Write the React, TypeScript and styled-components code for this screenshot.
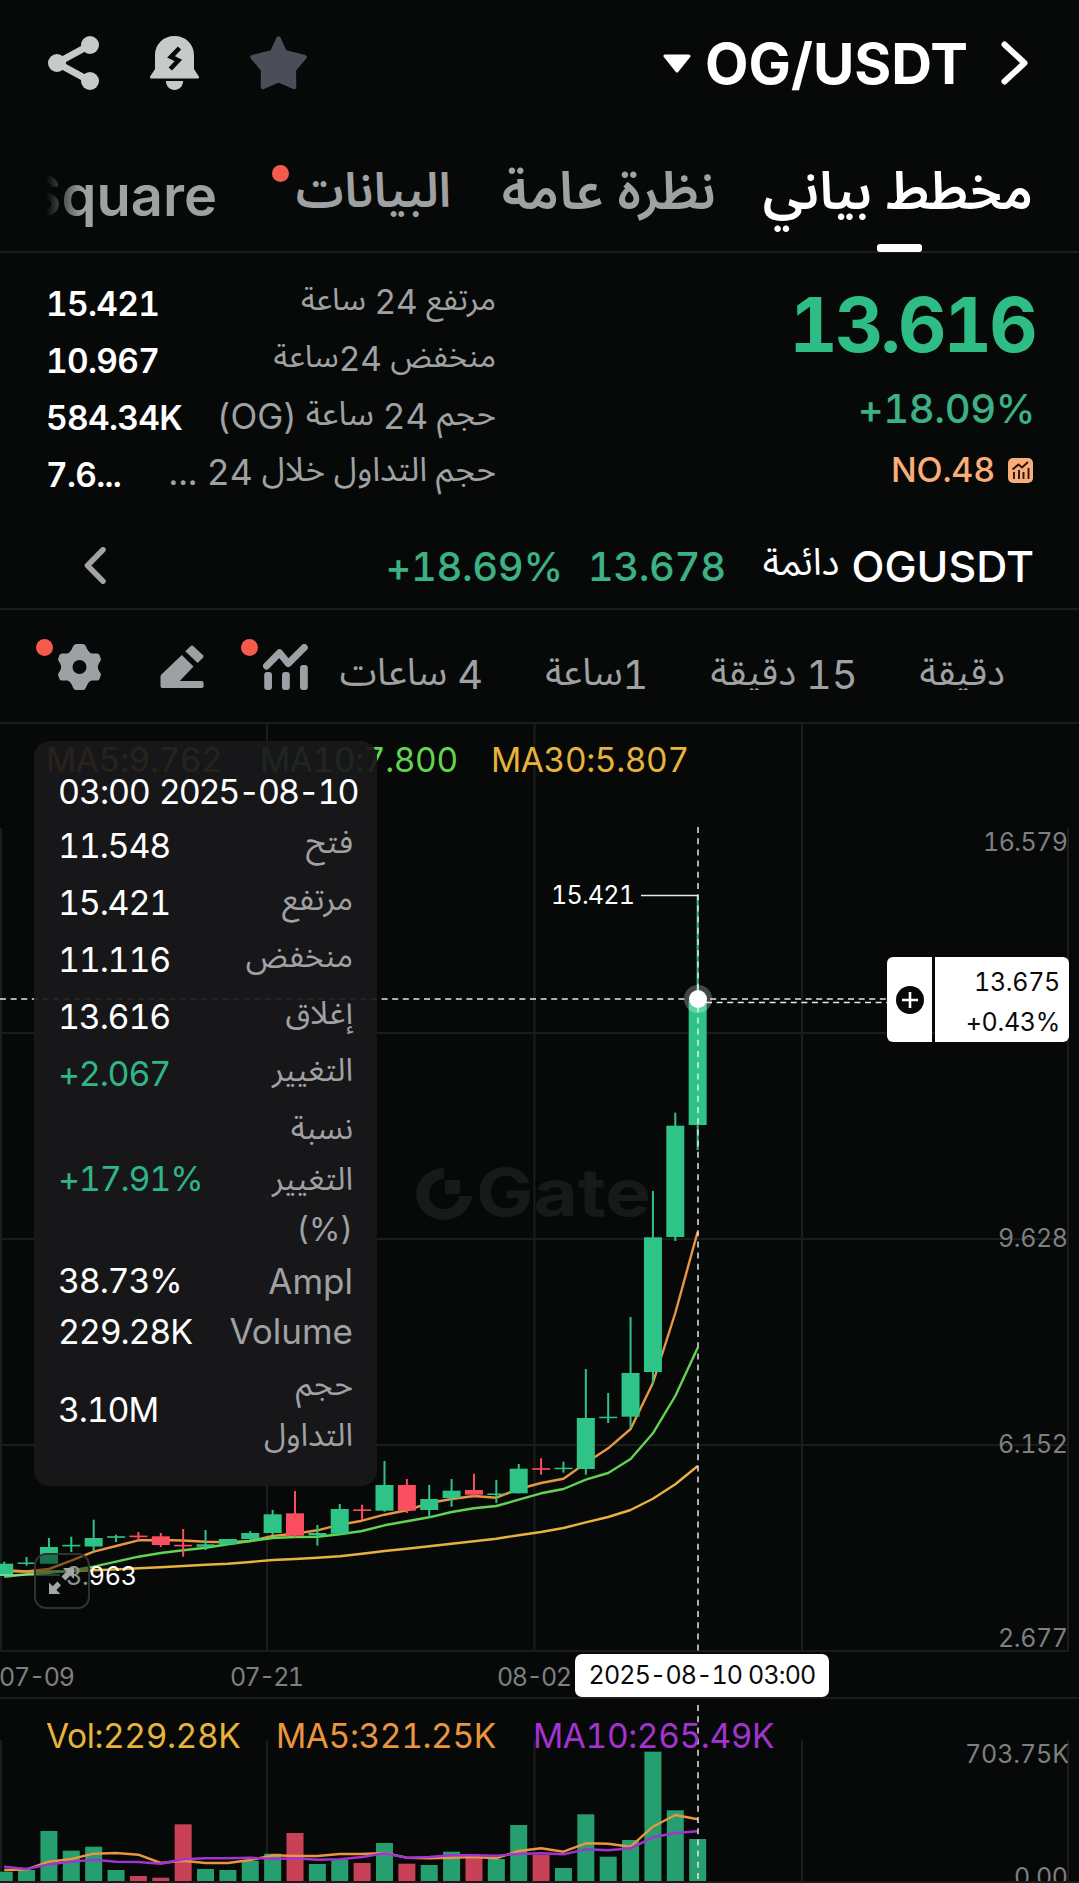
import styled, { createGlobalStyle } from "styled-components";

const colors = {
  bg: "#070909",
  line: "#1b1d1d",
  text: "#ffffff",
  muted: "#9fa1a3",
  axis: "#7d7f80",
  green: "#2ebd85",
  candleUp: "#2ec487",
  candleDown: "#fb4f5f",
  volUp: "#259f6f",
  volDown: "#c94156",
  orange: "#e8963f",
  lime: "#62d352",
  yellow: "#e8b33c",
  purple: "#a233cf",
  peach: "#f9ae7a",
  dot: "#f45b4c",
};

const fontStack =
  'Inter, "Noto Sans Arabic", "DejaVu Sans", "Liberation Sans", sans-serif';

/*
 *  data
 */
const STEP = 22.37;
const FIRST_X = 4.2;
const xAt = (idx: number): number => FIRST_X + idx * STEP;

// high, body top, body bottom, low, is up
type Candle = [number, number, number, number, boolean];

const candles: Candle[] = [
  [1561.7, 1563.7, 1576, 1576, true],
  [1557, 1562.5, 1564, 1565.7, true],
  [1538, 1547, 1563.7, 1563.7, true],
  [1536.7, 1544.8, 1546.4, 1552, true],
  [1519.7, 1538, 1546.5, 1551, true],
  [1534.7, 1536.2, 1537.8, 1542, true],
  [1532, 1535.6, 1537.2, 1540.3, false],
  [1533, 1536.3, 1545, 1547, false],
  [1529, 1544.8, 1546.4, 1556.7, false],
  [1530, 1544.3, 1546.7, 1550, true],
  [1539, 1539, 1544.3, 1544.3, true],
  [1531, 1533, 1539, 1540, true],
  [1510, 1514.3, 1533, 1535, true],
  [1491, 1513.3, 1535.7, 1537, false],
  [1525, 1533, 1535.3, 1545.7, true],
  [1504, 1509, 1533.7, 1533.7, true],
  [1504.7, 1509.4, 1511, 1520, false],
  [1461, 1485, 1510.7, 1511.7, true],
  [1479, 1485, 1510.7, 1513, false],
  [1485, 1499, 1510, 1518, true],
  [1479, 1490.7, 1498, 1506.7, true],
  [1473.7, 1490, 1494.7, 1496.7, false],
  [1480, 1493.5, 1495, 1503, true],
  [1464, 1468.7, 1493.3, 1493.3, true],
  [1458.3, 1468.2, 1469.8, 1474.7, false],
  [1461.7, 1467.7, 1469.2, 1472.7, true],
  [1369, 1418, 1469, 1474.7, true],
  [1393, 1416.7, 1418.2, 1423, true],
  [1317, 1373, 1416.7, 1428, true],
  [1191, 1237.3, 1372, 1384, true],
  [1112.7, 1125.7, 1237, 1241, true],
  [895, 1001, 1125, 1150, true],
];

const ma5 = [
  1570, 1571.5, 1569, 1560.7, 1551.7, 1546, 1540.3, 1540, 1540.5, 1541.7,
  1542.3, 1541, 1536, 1533.7, 1530.3, 1524.7, 1520.7, 1514.7, 1510.3, 1503,
  1499, 1496, 1497.7, 1489, 1483, 1478.7, 1463, 1448.3, 1429, 1383, 1313,
  1231.7,
];
const ma10 = [
  1576.7, 1574.3, 1572.7, 1570.5, 1566.7, 1561.7, 1556.7, 1553, 1550.3, 1547.7,
  1544.3, 1541, 1538, 1537, 1536.7, 1534.3, 1531, 1525.3, 1521.3, 1517.3, 1512,
  1508.3, 1506, 1499.7, 1493.3, 1489, 1479.7, 1473, 1459, 1433.3, 1396, 1347.7,
];
const ma30 = [
  1571, 1571.5, 1571.5, 1571.2, 1570.3, 1569.4, 1568.3, 1567.2, 1566, 1564.8,
  1563.7, 1562, 1560, 1559, 1557.7, 1556.3, 1553.7, 1551, 1548.7, 1546.2,
  1543.7, 1541.2, 1538.7, 1535.2, 1532, 1528, 1522.3, 1517, 1510, 1498.7,
  1484.3, 1466,
];

const volumeTops = [
  1871.7, 1870, 1831, 1850.7, 1846.7, 1870, 1876, 1877.7, 1824.3, 1869, 1870,
  1860.7, 1853.7, 1833, 1864, 1860, 1863, 1843, 1863.7, 1865, 1851.7, 1857,
  1859, 1825, 1855, 1868, 1814.3, 1856.7, 1840, 1751.7, 1810.3, 1839,
];
const volMa5 = [
  1870, 1869.5, 1861.7, 1859, 1853.7, 1853, 1854.7, 1863, 1860.7, 1863, 1863,
  1860, 1855.3, 1856, 1856, 1854, 1854, 1853, 1857.7, 1858.3, 1857.7, 1857,
  1858.3, 1851, 1848.3, 1851.7, 1843.3, 1843.7, 1846.7, 1826.7, 1815, 1819.3,
];
const volMa10 = [
  1866.7, 1869, 1864.3, 1861.7, 1859.7, 1861.7, 1862, 1863.7, 1859.3, 1858.3,
  1858.3, 1857.7, 1859, 1858.3, 1859.7, 1859.3, 1857, 1853.3, 1857.7, 1857,
  1855.3, 1855.3, 1855.7, 1854, 1853.3, 1854.3, 1849.3, 1850.3, 1848.3, 1837.3,
  1833, 1831.3,
];

const toPoints = (ys: number[]): string =>
  ys.map((y, idx) => `${xAt(idx).toFixed(1)},${y}`).join(" ");

const gridColumns = [267, 534.5, 802];

const tooltipRows = [
  { label: ["فتح"], value: "11.548" },
  { label: ["مرتفع"], value: "15.421" },
  { label: ["منخفض"], value: "11.116" },
  { label: ["إغلاق"], value: "13.616" },
  { label: ["التغيير"], value: "+2.067", isUp: true },
  { label: ["نسبة", "التغيير", "(%)"], value: "+17.91%", isUp: true, height: 153 },
  { label: ["Ampl"], value: "38.73%", height: 51, isLatin: true },
  { label: ["Volume"], value: "229.28K", height: 50, isLatin: true },
  { label: ["حجم", "التداول"], value: "3.10M", height: 106 },
];

/*
 *  icons
 */
const ShareIcon = () => (
  <svg width="51" height="54" viewBox="0 0 51 54" fill="#c6cacb">
    <path d="M42 9 9 27l33 18" fill="none" stroke="#c6cacb" strokeWidth="7" />
    <circle cx="9" cy="27" r="9" />
    <circle cx="42" cy="9" r="9" />
    <circle cx="42" cy="45" r="9" />
  </svg>
);

const BellIcon = () => (
  <svg width="49" height="54" viewBox="0 0 49 54" fill="#c6cacb">
    <path d="M24.5 0C35.5 0 44 8 44 19v14l4.8 7.6c.6 1.2.1 1.9-1 1.9H1.2c-1.1 0-1.6-.7-1-1.9L5 33V19C5 8 13.5 0 24.5 0Z" />
    <path d="M16 45h17c0 5.500-3.800 9-8.500 9S16 50.500 16 45Z" />
    <path
      d="m29.500 12-8.500 8.800 7.300 3.700-8 8.500"
      fill="none"
      stroke={colors.bg}
      strokeWidth="4.600"
    />
  </svg>
);

const StarIcon = () => (
  <svg width="57" height="54" viewBox="0 0 57 54">
    <path
      d="m28.500 2.500 6.200 13.600 19.800 5-10.700 12.700.2 17.200-15.500-6.700L13 51l.2-17.200L2.500 21.100l19.800-5Z"
      fill="#4b4d58"
      stroke="#4b4d58"
      strokeWidth="4.500"
      strokeLinejoin="round"
    />
  </svg>
);

const CaretIcon = () => (
  <svg width="28" height="19" viewBox="0 0 28 19">
    <path
      d="M2 2h24L14 17Z"
      fill="#fff"
      stroke="#fff"
      strokeWidth="3"
      strokeLinejoin="round"
    />
  </svg>
);

const NextIcon = () => (
  <svg width="28" height="44" viewBox="0 0 28 44" fill="none">
    <path
      d="m3.500 3.500 20 18.500-20 18.500"
      stroke="#fff"
      strokeWidth="6"
      strokeLinecap="round"
      strokeLinejoin="round"
    />
  </svg>
);

const BackIcon = () => (
  <svg width="22" height="37" viewBox="0 0 22 37" fill="none">
    <path
      d="M19 2.800 3.500 18.500 19 34.200"
      stroke="#a2a3a7"
      strokeWidth="5.500"
      strokeLinecap="round"
      strokeLinejoin="round"
    />
  </svg>
);

const RankIcon = () => (
  <svg width="25" height="25" viewBox="0 0 25 25" fill="none">
    <rect width="25" height="25" rx="5" fill={colors.peach} />
    <g stroke="#2a160a">
      <path d="m4.500 11.500 6-5 3.500 3 6-5.500" strokeWidth="2" />
      <path d="M6 14v7M11 12v9M15.500 14v7M20.500 10v11" strokeWidth="1.900" />
    </g>
  </svg>
);

const GearIcon = () => (
  <svg width="43" height="46" viewBox="0 0 43 46">
    <path
      fillRule="evenodd"
      fill="#9da0a4"
      d="M18 0h7q2 0 3 2.500 2.500 6.300 5.500 7h5.500q1.800 0 2.500 1.500l1.200 3.300q.6 1.500-.5 3-2.500 3.500-2.500 5.700t2.500 5.700q1.100 1.500.5 3L41.500 35q-.7 1.500-2.500 1.500h-5.500q-3 .7-5.500 7-1 2.500-3 2.500h-7q-2 0-3-2.500-2.500-6.300-5.500-7H4q-1.800 0-2.500-1.500L.3 31.700q-.6-1.500.5-3Q3.300 25.200 3.300 23T.8 17.300q-1.100-1.500-.5-3L1.500 11Q2.200 9.500 4 9.500h5.500q3-.7 5.500-7Q16 0 18 0Zm3.500 16a7 7 0 1 0 0 14 7 7 0 0 0 0-14Z"
    />
  </svg>
);

const PencilIcon = () => (
  <svg width="44" height="44" viewBox="0 0 44 44" fill="#9da0a4">
    <path d="M21.800 10 33.500 21.500 19.800 36h22q1.800 0 1.800 1.800v3.400q0 1.800-1.800 1.800H2.300Q.5 43 .5 41.200v-9.500Q.5 30.500 1.400 29.500Z" />
    <path d="M30.800 1q1.200-1 2.400 0l9.800 9.300q1 1.200 0 2.400L37.600 18 25.300 6.300Z" />
  </svg>
);

const IndicatorIcon = () => (
  <svg width="46" height="46" viewBox="0 0 46 46" fill="#9da0a4">
    <path
      d="M3.500 22 16.500 8.800l8.700 10.700L41.300 3.500"
      fill="none"
      stroke="#9da0a4"
      strokeWidth="7"
      strokeLinecap="round"
      strokeLinejoin="round"
    />
    <rect x="1.200" y="28" width="7.800" height="18" rx="3" />
    <rect x="19" y="28" width="7.800" height="18" rx="3" />
    <rect x="37" y="21" width="7.800" height="25" rx="3" />
  </svg>
);

const ExpandIcon = () => (
  <svg width="28" height="30" viewBox="0 0 28 30" fill="#a5a6a6">
    <path d="M15 2h11v11l-3.600-3.600-5 5-3.900-3.900 5-5Z" />
    <path d="M1 28V16.500l3.700 3.700 4.700-4.700 3.600 3.800-4.600 4.600 3.900 4.100Z" />
  </svg>
);

/*
 *  chart
 */
const PriceChart = () => (
  <Plot viewBox="0 724 1079 974" width="1079" height="974">
    <g stroke={colors.line} strokeWidth="2">
      {gridColumns.map((x) => (
        <line key={x} x1={x} x2={x} y1="724" y2="1651" />
      ))}
      <line x1="1" x2="1" y1="828" y2="1651" />
      <line x1="1068" x2="1068" y1="828" y2="1651" />
      {[1033, 1239, 1445, 1651].map((y) => (
        <line key={y} x1="0" x2="1068" y1={y} y2={y} />
      ))}
    </g>

    <g fill="#17191a">
      <path d="M444 1168v11a15 15 0 1 0 15 17h13a28 26 0 1 1-28-28Z" />
      <rect x="445" y="1180" width="15" height="14" />
      <text
        x="476"
        y="1216"
        fontSize="66"
        fontWeight="700"
        textLength="175"
        lengthAdjust="spacingAndGlyphs"
      >
        Gate
      </text>
    </g>

    <g fill="none" strokeWidth="2.400" strokeLinejoin="round">
      <polyline points={toPoints(ma30)} stroke={colors.yellow} />
      <polyline points={toPoints(ma5)} stroke={colors.orange} />
      <polyline points={toPoints(ma10)} stroke={colors.lime} />
    </g>

    {candles.map(([high, top, bottom, low, isUp], idx) => (
      <g key={idx} fill={isUp ? colors.candleUp : colors.candleDown}>
        <rect x={xAt(idx) - 1} y={high} width="2" height={low - high} />
        <rect x={xAt(idx) - 9} y={top} width="18" height={bottom - top} />
      </g>
    ))}

    <g stroke="#e6e8e8" strokeWidth="1.500" fill="none">
      <path d="M698 827V1651" strokeDasharray="6 5.200" />
      <path d="M0 999H888" strokeDasharray="6 4.600" />
      <path d="M706 1002.500H888" strokeDasharray="6 4.600" />
      <path d="M641 895.500H698" />
      <path d="M0 1575H60" opacity="0.5" />
    </g>
    <circle cx="698" cy="999" r="14" fill="#fff" opacity="0.25" />
    <circle cx="698" cy="999" r="9" fill="#fff" />

    <g fontSize="25" fill="#fff">
      <text x="551" y="904" textLength="84">
        15.421
      </text>
      <text x="66" y="1585" textLength="71">
        3.963
      </text>
    </g>
    <g fontSize="25" fill={colors.axis}>
      <text x="983" y="851" textLength="85">
        16.579
      </text>
      <text x="998" y="1247" textLength="70">
        9.628
      </text>
      <text x="998" y="1453" textLength="70">
        6.152
      </text>
      <text x="998" y="1647" textLength="70">
        2.677
      </text>
      <text x="-1" y="1686" textLength="76">
        07-09
      </text>
      <text x="230" y="1686" textLength="74">
        07-21
      </text>
      <text x="497" y="1686" textLength="75">
        08-02
      </text>
    </g>
  </Plot>
);

const VolumeChart = () => (
  <Plot viewBox="0 1699 1079 184" width="1079" height="184">
    <g stroke={colors.line} strokeWidth="2">
      {[1, ...gridColumns, 1068].map((x) => (
        <line key={x} x1={x} x2={x} y1="1740" y2="1881" />
      ))}
      <line x1="0" x2="1079" y1="1882" y2="1882" />
    </g>
    {volumeTops.map((top, idx) => (
      <rect
        key={idx}
        x={xAt(idx) - 8.5}
        y={top}
        width="17"
        height={1881 - top}
        fill={candles[idx][4] ? colors.volUp : colors.volDown}
      />
    ))}
    <g fill="none" strokeWidth="2.400" strokeLinejoin="round">
      <polyline points={toPoints(volMa5)} stroke={colors.orange} />
      <polyline points={toPoints(volMa10)} stroke={colors.purple} />
    </g>
    <path
      d="M698 1705V1881"
      stroke="#e6e8e8"
      strokeWidth="1.500"
      strokeDasharray="6 5.200"
    />
    <svg x="0" y="1699" width="1079" height="182">
      <g fontSize="25" fill={colors.axis}>
        <text x="965" y="64" textLength="104">
          703.75K
        </text>
        <text x="1014" y="187" textLength="54">
          0.00
        </text>
      </g>
    </svg>
  </Plot>
);

const App = () => (
  <Screen>
    <GlobalStyle />
    <Header>
      <HeaderIcons>
        <ShareIcon />
        <BellIcon />
        <StarIcon />
      </HeaderIcons>
      <Pair>
        <CaretIcon />
        <PairName>OG/USDT</PairName>
        <NextIcon />
      </Pair>
    </Header>

    <Tabs>
      <Tab $width={171} $size={56} $isFaded>
        Square
      </Tab>
      <Tab $width={155} $size={48} dir="rtl">
        البيانات
        <Dot $left={-24} $top={3} />
      </Tab>
      <Tab $width={215} $size={52.5} dir="rtl">
        نظرة عامة
      </Tab>
      <Tab $width={267} $size={52.5} $isActive dir="rtl">
        مخطط بياني
      </Tab>
    </Tabs>

    <Summary>
      <Stats>
        <Stat>
          <StatValue>15.421</StatValue>
          <StatLabel $size={31.5}>
            مرتفع <Num>24</Num> ساعة
          </StatLabel>
        </Stat>
        <Stat>
          <StatValue>10.967</StatValue>
          <StatLabel $size={31.5}>
            منخفض <Num>24</Num>ساعة
          </StatLabel>
        </Stat>
        <Stat>
          <StatValue>584.34K</StatValue>
          <StatLabel $size={33}>
            حجم <Num>24</Num> ساعة <Num>(OG)</Num>
          </StatLabel>
        </Stat>
        <Stat>
          <StatValue>7.6...</StatValue>
          <StatLabel $size={33.5}>
            حجم التداول خلال <Num>24 ...</Num>
          </StatLabel>
        </Stat>
      </Stats>
      <Quote>
        <Price>13.616</Price>
        <Change>+18.09%</Change>
        <Rank>
          NO.48
          <RankIcon />
        </Rank>
      </Quote>
    </Summary>

    <Perp>
      <BackIcon />
      <PerpQuote>
        <PerpNumber>+18.69%</PerpNumber>
        <PerpNumber>13.678</PerpNumber>
        <PerpKind dir="rtl">دائمة</PerpKind>
        <PerpName>OGUSDT</PerpName>
      </PerpQuote>
    </Perp>

    <Toolbar>
      <Tool>
        <GearIcon />
        <Dot $left={-22} $top={-5} />
      </Tool>
      <Tool>
        <PencilIcon />
      </Tool>
      <Tool>
        <IndicatorIcon />
        <Dot $left={-22} $top={-5} />
      </Tool>
      <Intervals>
        <Interval $width={144}>
          <Num>4</Num> ساعات
        </Interval>
        <Interval $width={106}>
          <Num>1</Num>ساعة
        </Interval>
        <Interval $width={150}>
          <Num>15</Num> دقيقة
        </Interval>
        <Interval $width={88}>دقيقة</Interval>
      </Intervals>
    </Toolbar>

    <PricePanel>
      <PriceChart />
      <Legend $top={18}>
        <LegendItem $color={colors.orange} $width={178}>
          MA5:9.762
        </LegendItem>
        <LegendItem $color={colors.lime} $width={195}>
          MA10:7.800
        </LegendItem>
        <LegendItem $color={colors.yellow} $width={197}>
          MA30:5.807
        </LegendItem>
      </Legend>

      <Tooltip>
        <TooltipDate>
          <TooltipTime>03:00</TooltipTime>
          <span>2025-08-10</span>
        </TooltipDate>
        {tooltipRows.map(({ label, value, isUp, height, isLatin }) => (
          <TooltipRow key={value} $height={height}>
            <TooltipValue $isUp={isUp}>{value}</TooltipValue>
            <TooltipLabel $isLatin={isLatin} $isTall={label.length > 1}>
              {label.map((line) => (
                <span key={line}>{line}</span>
              ))}
            </TooltipLabel>
          </TooltipRow>
        ))}
      </Tooltip>

      <PriceBadge>
        <PlusCell>
          <svg width="28" height="28" viewBox="0 0 28 28">
            <circle cx="14" cy="14" r="14" fill={colors.bg} />
            <path d="M14 6v16M6 14h16" stroke="#fff" strokeWidth="2.600" />
          </svg>
        </PlusCell>
        <PriceCell>
          <span>13.675</span>
          <span>+0.43%</span>
        </PriceCell>
      </PriceBadge>

      <ExpandButton type="button">
        <ExpandIcon />
      </ExpandButton>
      <DateBadge>2025-08-10 03:00</DateBadge>
    </PricePanel>

    <VolumePanel>
      <VolumeChart />
      <Legend $top={19}>
        <LegendItem $color={colors.yellow} $width={194}>
          Vol:229.28K
        </LegendItem>
        <LegendItem $color={colors.orange} $width={221}>
          MA5:321.25K
        </LegendItem>
        <LegendItem $color={colors.purple} $width={240}>
          MA10:265.49K
        </LegendItem>
      </Legend>
    </VolumePanel>
  </Screen>
);

const GlobalStyle = createGlobalStyle`
  * {
    box-sizing: border-box;
  }

  body {
    margin: 0;
    background: ${colors.bg};
    color: ${colors.text};
    font-family: ${fontStack};
    font-variant-numeric: tabular-nums;
    overflow: hidden;
  }

  svg {
    display: block;
    flex: none;
  }
`;

const Screen = styled.main`
  display: flex;
  flex-direction: column;
  width: 1079px;
  height: 1883px;
  overflow: hidden;
`;

const Header = styled.header`
  display: flex;
  align-items: center;
  justify-content: space-between;
  height: 126px;
  padding: 0 50px 0 48px;
`;

const HeaderIcons = styled.div`
  display: flex;
  gap: 51px;
`;

const Pair = styled.div`
  display: flex;
  align-items: center;
`;

const PairName = styled.h1`
  margin: 0 33px 0 14px;
  padding-top: 1px;
  font-size: 56.5px;
  font-weight: 700;
  line-height: 60px;
`;

const Tabs = styled.nav`
  display: flex;
  gap: 50px;
  height: 127px;
  padding: 36px 46px 0;
  border-bottom: 2px solid ${colors.line};
`;

const Tab = styled.div<{
  $width: number;
  $size: number;
  $isActive?: boolean;
  $isFaded?: boolean;
}>`
  position: relative;
  display: flex;
  flex-direction: column;
  width: ${(props) => props.$width}px;
  height: 90px;
  color: ${(props) => (props.$isActive ? colors.text : colors.muted)};
  font-size: ${(props) => props.$size}px;
  font-weight: 600;
  line-height: 56px;
  white-space: nowrap;

  ${(props) =>
    props.$isFaded &&
    `
      align-items: flex-end;
      margin-right: auto;
      padding-top: 6px;
      overflow: hidden;
      mask-image: linear-gradient(to right, transparent, #000 36px);
    `}

  ${(props) =>
    props.$isActive &&
    `
      &::after {
        content: "";
        width: 45px;
        height: 8px;
        margin: auto auto 0;
        border-radius: 3px;
        background: ${colors.text};
      }
    `}
`;

const Dot = styled.i<{ $left: number; $top: number }>`
  position: absolute;
  left: ${(props) => props.$left}px;
  top: ${(props) => props.$top}px;
  width: 17px;
  height: 17px;
  border-radius: 50%;
  background: ${colors.dot};
`;

const Summary = styled.section`
  display: flex;
  justify-content: space-between;
  height: 269px;
  padding: 22px 44px 0 46px;
`;

const Stats = styled.div`
  width: 450px;
`;

const Stat = styled.div`
  display: flex;
  align-items: center;
  justify-content: space-between;
  height: 57px;
`;

const StatValue = styled.span`
  font-size: 33.5px;
  font-weight: 600;
  letter-spacing: -0.7px;
`;

const Num = styled.span`
  font-size: 1.06em;
  vertical-align: -4px;
`;

const StatLabel = styled.span.attrs({ dir: "rtl" })<{ $size: number }>`
  padding-bottom: 7px;
  color: ${colors.muted};
  font-size: ${(props) => props.$size}px;
  line-height: 40px;
  white-space: nowrap;
`;

const Quote = styled.div`
  display: flex;
  flex-direction: column;
  align-items: flex-end;
`;

const Price = styled.strong`
  margin-top: 12px;
  color: ${colors.green};
  font-size: 75px;
  font-weight: 700;
  letter-spacing: -2.8px;
  line-height: 76px;
`;

const Change = styled.span`
  margin-top: 21px;
  color: #3bb184;
  font-size: 40px;
  font-weight: 500;
  letter-spacing: -0.4px;
  line-height: 50px;
`;

const Rank = styled.span`
  display: flex;
  align-items: center;
  gap: 13px;
  margin: 15px 2px 0 0;
  color: ${colors.peach};
  font-size: 34px;
  font-weight: 500;
  letter-spacing: -0.2px;
  line-height: 42px;
`;

const Perp = styled.section`
  display: flex;
  align-items: center;
  justify-content: space-between;
  height: 88px;
  padding: 0 45px 0 84px;
  border-bottom: 2px solid ${colors.line};
`;

const PerpQuote = styled.div`
  display: flex;
  align-items: center;
`;

const PerpNumber = styled.span`
  margin-right: 25px;
  padding-top: 2px;
  color: #3bb184;
  font-size: 40px;
  font-weight: 500;
  letter-spacing: -0.4px;
`;

const PerpKind = styled.span`
  margin: 0 12px 4px 12px;
  font-size: 37.5px;
`;

const PerpName = styled.span`
  padding-top: 2px;
  font-size: 43px;
  font-weight: 500;
`;

const Toolbar = styled.section`
  display: flex;
  align-items: center;
  gap: 59px;
  height: 114px;
  padding: 2px 74px 0 58px;
  border-bottom: 2px solid ${colors.line};
`;

const Tool = styled.div`
  position: relative;
`;

const Intervals = styled.div`
  display: flex;
  flex: 1;
  justify-content: space-between;
  height: 46px;
  margin-left: -29px;
  overflow: hidden;
`;

const Interval = styled.span.attrs({ dir: "rtl" })<{ $width: number }>`
  width: ${(props) => props.$width}px;
  color: ${colors.muted};
  font-size: 37.5px;
  line-height: 55px;
  white-space: nowrap;
`;

const Plot = styled.svg`
  font-family: ${fontStack};
`;

const PricePanel = styled.section`
  position: relative;
  height: 975px;
  border-bottom: 2px solid ${colors.line};
`;

const VolumePanel = styled.section`
  position: relative;
  height: 184px;
`;

const Legend = styled.div<{ $top: number }>`
  position: absolute;
  left: 46px;
  top: ${(props) => props.$top}px;
  display: flex;
  gap: 36px;
`;

const LegendItem = styled.span<{ $color: string; $width: number }>`
  width: ${(props) => props.$width}px;
  color: ${(props) => props.$color};
  font-size: 33.5px;
  letter-spacing: -0.4px;
  line-height: 36px;
  white-space: nowrap;
`;

const Tooltip = styled.aside`
  position: absolute;
  left: 34px;
  top: 17px;
  width: 343px;
  height: 745px;
  padding: 25px 24px 0 24px;
  border-radius: 16px;
  background: rgba(25, 25, 27, 0.93);
`;

const TooltipDate = styled.div`
  display: flex;
  gap: 9px;
  font-size: 34px;
  letter-spacing: -2.2px;
  line-height: 51px;
  white-space: nowrap;
`;

const TooltipTime = styled.span`
  letter-spacing: -1.1px;
`;

const TooltipRow = styled.div<{ $height?: number }>`
  display: flex;
  align-items: center;
  justify-content: space-between;
  height: ${(props) => props.$height ?? 57}px;
`;

const TooltipValue = styled.span<{ $isUp?: boolean }>`
  color: ${(props) => (props.$isUp ? "#2fb588" : colors.text)};
  font-size: 34px;
  letter-spacing: -1.2px;
`;

const TooltipLabel = styled.span<{ $isLatin?: boolean; $isTall?: boolean }>`
  display: flex;
  flex-direction: column;
  align-items: flex-end;
  padding-bottom: ${(props) => (props.$isLatin ? 0 : props.$isTall ? 1 : 8)}px;
  color: ${colors.muted};
  font-size: ${(props) => (props.$isLatin ? 35 : 32)}px;
  line-height: ${(props) => (props.$isTall ? 51 : 50)}px;
`;

const PriceBadge = styled.div`
  position: absolute;
  left: 887px;
  top: 233px;
  display: flex;
  gap: 3px;
  width: 182px;
  height: 85px;
  border-radius: 6px;
  overflow: hidden;
`;

const PlusCell = styled.div`
  display: flex;
  align-items: center;
  justify-content: center;
  width: 45px;
  background: #fff;
`;

const PriceCell = styled.div`
  display: flex;
  flex: 1;
  flex-direction: column;
  align-items: flex-end;
  justify-content: center;
  padding: 4px 9px 0 0;
  background: #fff;
  color: #0a0a0a;
  font-size: 25px;
  letter-spacing: -0.3px;
  line-height: 40px;
`;

const ExpandButton = styled.button`
  position: absolute;
  left: 34px;
  top: 829px;
  display: flex;
  align-items: center;
  justify-content: center;
  width: 56px;
  height: 56px;
  padding: 0;
  border: 2px solid #303232;
  border-radius: 12px;
  background: rgba(7, 9, 9, 0.45);
`;

const DateBadge = styled.div`
  position: absolute;
  left: 575px;
  top: 930px;
  width: 254px;
  height: 43px;
  border-radius: 7px;
  background: #fff;
  color: #0a0a0a;
  font-size: 25px;
  letter-spacing: -0.85px;
  line-height: 42px;
  text-align: center;
  white-space: nowrap;
`;

export default App;
